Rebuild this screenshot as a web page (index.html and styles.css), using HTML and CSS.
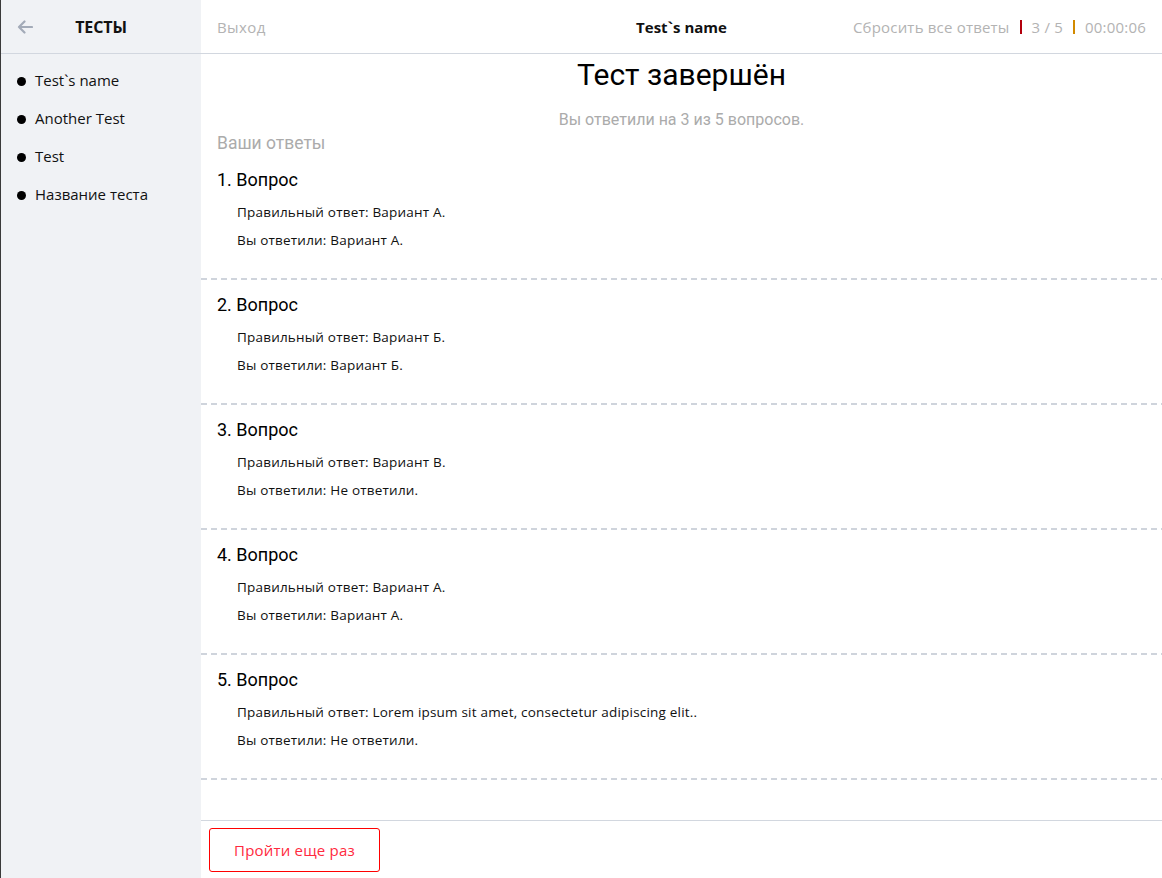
FILE: index.html
```html
<!DOCTYPE html>
<html lang="ru">
<head>
<meta charset="utf-8">
<title>Тест завершён</title>
<link rel="stylesheet" href="styles.css">
</head>
<body>
<div class="app">
  <aside class="sidebar">
    <div class="side-head">
      <svg class="back" width="16" height="14" viewBox="0 0 16 14"><path d="M15 7H2M7.5 1.5L2 7l5.5 5.5" fill="none" stroke="#a3abb8" stroke-width="2.2" stroke-linecap="round" stroke-linejoin="round"/></svg>
      <span class="side-title">ТЕСТЫ</span>
    </div>
    <ul class="tests">
      <li>Test`s name</li>
      <li>Another Test</li>
      <li>Test</li>
      <li>Название теста</li>
    </ul>
  </aside>
  <main class="main">
    <header class="topbar">
      <span class="exit">Выход</span>
      <span class="name">Test`s name</span>
      <div class="status">
        <span>Сбросить все ответы</span>
        <i class="sep red"></i>
        <span>3 / 5</span>
        <i class="sep orange"></i>
        <span>00:00:06</span>
      </div>
    </header>
    <section class="content">
      <h1 class="title">Тест завершён</h1>
      <p class="summary">Вы ответили на 3 из 5 вопросов.</p>
      <h2 class="yours">Ваши ответы</h2>
      <div class="q">
        <h3>1. Вопрос</h3>
        <p>Правильный ответ: Вариант А.</p>
        <p>Вы ответили: Вариант А.</p>
      </div>
      <div class="q">
        <h3>2. Вопрос</h3>
        <p>Правильный ответ: Вариант Б.</p>
        <p>Вы ответили: Вариант Б.</p>
      </div>
      <div class="q">
        <h3>3. Вопрос</h3>
        <p>Правильный ответ: Вариант В.</p>
        <p>Вы ответили: Не ответили.</p>
      </div>
      <div class="q">
        <h3>4. Вопрос</h3>
        <p>Правильный ответ: Вариант А.</p>
        <p>Вы ответили: Вариант А.</p>
      </div>
      <div class="q">
        <h3>5. Вопрос</h3>
        <p>Правильный ответ: Lorem ipsum sit amet, consectetur adipiscing elit..</p>
        <p>Вы ответили: Не ответили.</p>
      </div>
    </section>
    <footer class="footer">
      <button class="retry">Пройти еще раз</button>
    </footer>
  </main>
</div>
</body>
</html>
```
FILE: styles.css
```css
* { box-sizing: border-box; }
html, body { margin: 0; padding: 0; height: 100%; }
body {
  font-family: "Open Sans", "Lato", sans-serif;
  color: #111;
  background: #fff;
}
.app {
  display: flex;
  height: 878px;
  overflow: hidden;
}
.sidebar {
  width: 201px;
  flex: none;
  background: #f0f2f5;
  border-left: 1px solid #3a3a3a;
}
.side-head {
  height: 54px;
  border-bottom: 1px solid #d2d7df;
  display: grid;
  grid-template-columns: 1fr auto 1fr;
  align-items: center;
  padding-left: 16px;
}
.back { display: block; }
.side-title {
  font-weight: 700;
  font-size: 16px;
  letter-spacing: -0.1px;
  padding-right: 16px;
}
.tests {
  list-style: none;
  margin: 0;
  padding: 7px 0 0 16px;
}
.tests li {
  display: flex;
  align-items: center;
  height: 38px;
  font-size: 15px;
}
.tests li::before {
  content: "";
  width: 9px;
  height: 9px;
  border-radius: 50%;
  background: #000;
  margin-right: 9px;
  margin-top: 2px;
}
.main {
  flex: 1;
  display: flex;
  flex-direction: column;
  min-width: 0;
}
.topbar {
  height: 54px;
  flex: none;
  border-bottom: 1px solid #d2d7df;
  display: grid;
  grid-template-columns: 1fr auto 1fr;
  align-items: center;
  padding: 0 16px;
  font-size: 15px;
}
.exit { color: #b3b3b3; letter-spacing: 0.4px; }
.name { font-weight: 700; }
.status {
  justify-self: end;
  display: flex;
  align-items: center;
  color: #b3b3b3;
  letter-spacing: 0.2px;
}
.sep {
  display: inline-block;
  width: 2px;
  height: 14px;
  margin: 1px 10px 0;
}
.sep.red { background: #b3000d; }
.sep.orange { background: #d28a00; }
.content {
  flex: 1;
}
.title {
  margin: 0;
  padding-top: 1px;
  text-align: center;
  font-family: "Roboto", sans-serif;
  font-weight: 400;
  font-size: 30px;
  line-height: 40px;
  color: #000;
}
.summary {
  margin: 14px 0 0;
  text-align: center;
  font-family: "Roboto", sans-serif;
  font-size: 16px;
  line-height: 22px;
  color: #ababab;
}
.yours {
  margin: 0;
  padding-left: 16px;
  font-family: "Roboto", sans-serif;
  font-weight: 400;
  font-size: 17.5px;
  line-height: 24px;
  color: #ababab;
}
.q {
  height: 125px;
  padding: 13px 0 0 16px;
  background: repeating-linear-gradient(to right, #cfd4dc 0 6px, transparent 6px 10px) left bottom / 100% 2px no-repeat;
}
.q h3 {
  margin: 0;
  font-family: "Roboto", sans-serif;
  font-weight: 400;
  font-size: 18px;
  line-height: 24px;
  color: #000;
}
.q p {
  margin: 0;
  padding-left: 20px;
  font-size: 13.5px;
  letter-spacing: 0.2px;
  line-height: 28px;
  color: #111;
}
.q h3 + p { margin-top: 6px; }
.footer {
  height: 58px;
  flex: none;
  border-top: 1px solid #d2d7df;
  padding: 7px 8px 0;
}
.retry {
  display: block;
  width: 171px;
  height: 44px;
  background: #fff;
  border: 1px solid #ff0000;
  border-radius: 3px;
  color: #ff2a40;
  font-family: "Open Sans", "Lato", sans-serif;
  font-size: 15px;
  letter-spacing: 0.2px;
  cursor: pointer;
}
```
